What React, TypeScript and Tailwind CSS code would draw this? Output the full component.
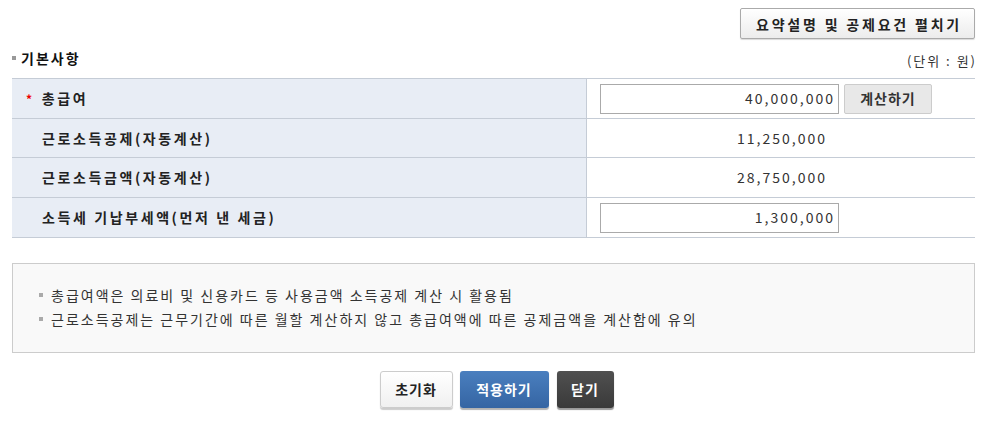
import React from "react";

const font = { fontFamily: '"Noto Sans CJK KR", "Noto Sans", sans-serif' };

export default function App() {
  return (
    <div className="w-[990px] h-[422px] bg-white text-[#333] text-[14px] pl-[12px] pr-[15px] pt-[8px]" style={font}>
      <div className="flex justify-end">
        <button className="h-[31px] w-[235px] border border-[#aaa] rounded-[2px] bg-gradient-to-b from-white to-[#ececec] text-[14px] font-bold text-[#222] tracking-[2.8px] pl-[3px] leading-none shadow-[0_1px_1px_rgba(0,0,0,0.15)]">
          요약설명 및 공제요건 펼치기
        </button>
      </div>
      <div className="flex justify-between h-[39px]">
        <div className="flex items-center gap-[5px] h-[14px] mt-[12px]">
          <span className="w-[4px] h-[4px] bg-[#999] inline-block" />
          <span className="font-bold text-[14px] text-[#111] tracking-[2px] leading-none">기본사항</span>
        </div>
        <span className="text-[13px] text-[#333] tracking-[2px] -mr-[2px] leading-none mt-[15px]">(단위 : 원)</span>
      </div>
      <div className="border-t border-[#c5ccd6]">
        <Row h="h-[40px]" label={<><span className="text-[#e00] mr-[7px] text-[12px]">*</span>총급여</>} star>
          <div className="flex items-center gap-[5px] pl-[13px]">
            <div className="w-[239px] h-[30px] border border-[#aaa] bg-white flex items-center justify-end pr-[3px] text-[14px] tracking-[2px]">40,000,000</div>
            <button className="w-[88px] h-[30px] border border-[#ccc] rounded-[2px] bg-[#e8e8e8] font-bold text-[#333] text-[14px] tracking-[1px]">계산하기</button>
          </div>
        </Row>
        <Row h="h-[39px]" label="근로소득공제(자동계산)">
          <div className="text-center pl-[2px] tracking-[2px]">11,250,000</div>
        </Row>
        <Row h="h-[40px]" label="근로소득금액(자동계산)">
          <div className="text-center pl-[2px] tracking-[2px]">28,750,000</div>
        </Row>
        <Row h="h-[40px]" label="소득세 기납부세액(먼저 낸 세금)">
          <div className="pl-[13px]">
            <div className="w-[239px] h-[30px] border border-[#aaa] bg-white flex items-center justify-end pr-[3px] text-[14px] tracking-[2px]">1,300,000</div>
          </div>
        </Row>
      </div>
      <div className="mt-[25px] h-[90px] border border-[#ccc] bg-[#f9f9f9] flex flex-col justify-center pl-[26px] pb-[2px] gap-[3px] text-[14px] text-[#333] tracking-[2px]">
        <div className="flex items-center gap-[8px] leading-[21px]"><span className="w-[4px] h-[4px] bg-[#aaa] inline-block" />총급여액은 의료비 및 신용카드 등 사용금액 소득공제 계산 시 활용됨</div>
        <div className="flex items-center gap-[8px] leading-[21px]"><span className="w-[4px] h-[4px] bg-[#aaa] inline-block" />근로소득공제는 근무기간에 따른 월할 계산하지 않고 총급여액에 따른 공제금액을 계산함에 유의</div>
      </div>
      <div className="flex justify-center gap-[7px] mt-[18px] pl-[6px]">
        <button className="w-[73px] h-[37px] rounded-[3px] border border-[#ccc] bg-gradient-to-b from-white to-[#f0f0f0] font-bold text-[#222] text-[14px] tracking-[1px] shadow-[0_2px_1px_rgba(0,0,0,0.2)]">초기화</button>
        <button className="w-[89px] h-[37px] rounded-[3px] bg-gradient-to-b from-[#4a7fbf] to-[#3565a3] font-bold text-white text-[14px] tracking-[1px] shadow-[0_2px_1px_rgba(0,0,0,0.3)]">적용하기</button>
        <button className="ml-[1px] w-[57px] h-[37px] rounded-[3px] bg-gradient-to-b from-[#505050] to-[#3a3a3a] font-bold text-white text-[14px] tracking-[1px] shadow-[0_2px_1px_rgba(0,0,0,0.4)]">닫기</button>
      </div>
    </div>
  );
}

function Row({ label, children, star, h }: { label: React.ReactNode; children: React.ReactNode; star?: boolean; h: string }) {
  return (
    <div className={`flex ${h} border-b border-[#c5ccd6]`}>
      <div className={`w-[575px] bg-[#e8edf5] border-r border-[#c5ccd6] flex items-center font-bold text-[14px] text-[#222] tracking-[2.6px] ${star ? "pl-[14px]" : "pl-[30px]"}`}>
        {label}
      </div>
      <div className="flex-1 flex items-center">
        <div className="w-full">{children}</div>
      </div>
    </div>
  );
}
